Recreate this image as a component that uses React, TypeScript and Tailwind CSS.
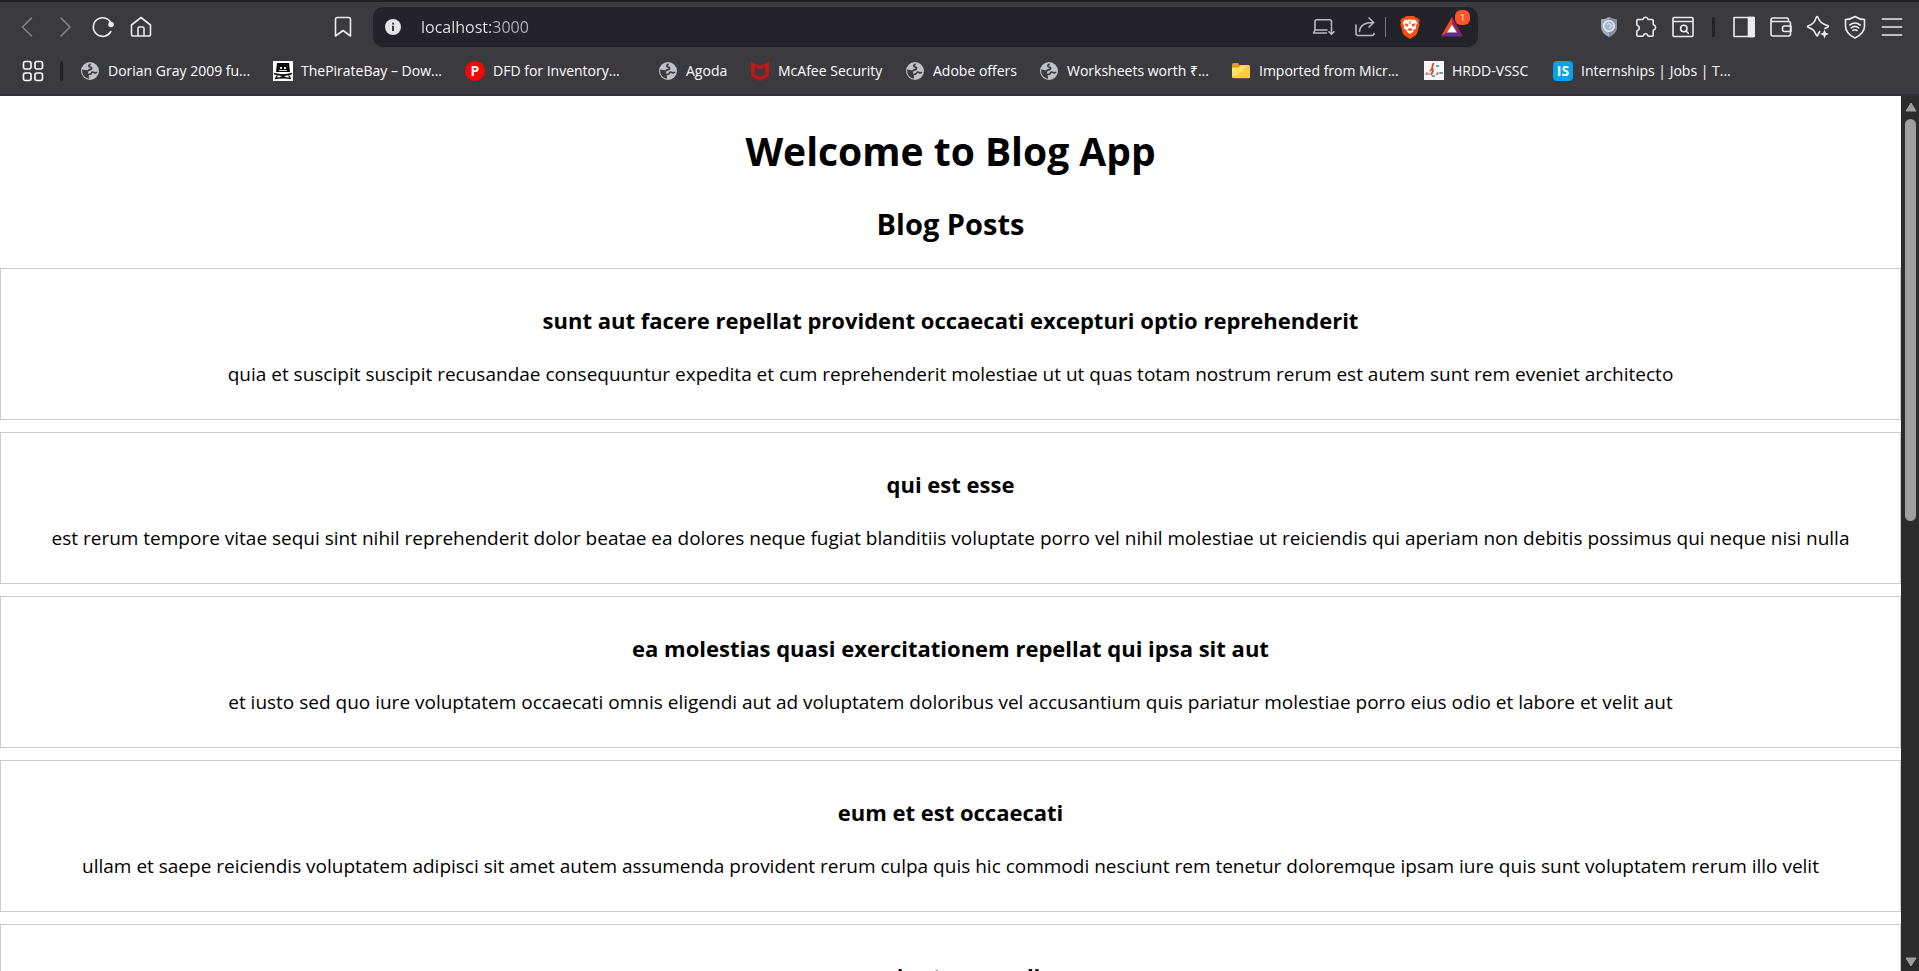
import type { ReactNode } from 'react';

type Post = { id: number; title: string; body: string };

const posts: Post[] = [
  {
    id: 1,
    title: 'sunt aut facere repellat provident occaecati excepturi optio reprehenderit',
    body: 'quia et suscipit suscipit recusandae consequuntur expedita et cum reprehenderit molestiae ut ut quas totam nostrum rerum est autem sunt rem eveniet architecto',
  },
  {
    id: 2,
    title: 'qui est esse',
    body: 'est rerum tempore vitae sequi sint nihil reprehenderit dolor beatae ea dolores neque fugiat blanditiis voluptate porro vel nihil molestiae ut reiciendis qui aperiam non debitis possimus qui neque nisi nulla',
  },
  {
    id: 3,
    title: 'ea molestias quasi exercitationem repellat qui ipsa sit aut',
    body: 'et iusto sed quo iure voluptatem occaecati omnis eligendi aut ad voluptatem doloribus vel accusantium quis pariatur molestiae porro eius odio et labore et velit aut',
  },
  {
    id: 4,
    title: 'eum et est occaecati',
    body: 'ullam et saepe reiciendis voluptatem adipisci sit amet autem assumenda provident rerum culpa quis hic commodi nesciunt rem tenetur doloremque ipsam iure quis sunt voluptatem rerum illo velit',
  },
  { id: 5, title: 'nesciunt quas odio', body: '' },
];

function Icon({ children, size = 'size-6' }: { children: ReactNode; size?: string }) {
  return (
    <svg
      viewBox="0 0 24 24"
      className={`${size} shrink-0`}
      fill="none"
      stroke="currentColor"
      strokeWidth="1.6"
      strokeLinecap="round"
      strokeLinejoin="round"
      aria-hidden="true"
    >
      {children}
    </svg>
  );
}

function ToolButton({ label, children, dim = false }: { label: string; children: ReactNode; dim?: boolean }) {
  return (
    <button
      type="button"
      aria-label={label}
      className={`flex h-10 w-[38px] shrink-0 items-center justify-center ${dim ? 'text-[#85848a]' : 'text-[#ececf0]'}`}
    >
      {children}
    </button>
  );
}

function Divider() {
  return <span className="h-5 w-[3px] shrink-0 rounded-full bg-[#232228]" />;
}

function GlobeIcon() {
  return (
    <svg viewBox="0 0 20 20" className="size-5 shrink-0" aria-hidden="true">
      <circle cx="10" cy="10" r="9" fill="#bfc1c6" />
      <path
        d="M10.6 2.9c-1.5.7-2.2 1.7-1.5 2.6.8.9 2 .3 2.4 1.4.4 1.2-.9 1.8-2.2 2-1.2.2-1.1 1.4-2.5 1.2L3 9.5c-.3 3.6 2.2 6.6 5.2 7.2.2-1.2-.6-1.6-.4-2.7.3-1 1.9-.6 2.9-1 1-.5.5-1.8 1.8-2 1.3-.2 1.7.9 2.9.8.8 0 1.2-.4 1.5-.8"
        fill="none"
        stroke="#3b3a3f"
        strokeWidth="1.7"
      />
      <path d="M3 9.6c1.800 1.200 3.600.4 5 1.600 1 1-.6 2.300-.4 3.300l.4 2C5 15.600 2.900 13 3 9.600Z" fill="#3b3a3f" />
    </svg>
  );
}

function PirateIcon() {
  return (
    <svg viewBox="0 0 20 20" className="size-5 shrink-0" aria-hidden="true">
      <path d="M0 0h20v20H0z" fill="#fff" />
      <path d="M4 2h12l1 9H3z" fill="#050505" />
      <path d="M7 6h2v2H7zM11 6h2v2h-2zM6 9h8v1H6z" fill="#ddd" />
      <path d="M1 12.500c6 2 12 2 18 0M2 17.500c5-1 11-1 16 0M5 13l-2 3.500M15 13l2 3.500M7 14l6 3M13 14l-6 3" stroke="#111" strokeWidth="1.500" fill="none" />
    </svg>
  );
}

function PIcon() {
  return (
    <span className="flex size-5 shrink-0 items-center justify-center rounded-full bg-[#f90505] text-sm font-bold leading-5 text-white">
      P
    </span>
  );
}

function McAfeeIcon() {
  return (
    <svg viewBox="0 0 20 20" className="size-5 shrink-0" aria-hidden="true">
      <path d="M1 0.500 10 5l9-4.500v15L10 20l-9-4.500ZM4.700 6v7.200l5.300 2.700 5.300-2.700V6L10 8.800Z" fill="#c01818" fillRule="evenodd" />
    </svg>
  );
}

function FolderIcon() {
  return (
    <svg viewBox="0 0 20 20" className="size-5 shrink-0" aria-hidden="true">
      <path d="M1 3.500Q1 2 2.500 2H7l2 2.500h3V8H1Z" fill="#dca006" />
      <path d="M1 6.500h6.500L9.500 4h8Q19 4 19 5.500v10.300q0 1.500-1.500 1.500h-15Q1 17.300 1 15.800Z" fill="#fbcb43" />
      <path d="M1 7h6.800l2-2.300H16L6 15H1Z" fill="#ffdf70" />
    </svg>
  );
}

function HrddIcon() {
  return (
    <svg viewBox="0 0 20 20" className="size-5 shrink-0" aria-hidden="true">
      <path d="M0 0h20v19H0z" fill="#f7f7f7" />
      <path d="m9.500 2-1.500 5 1 3-2 4M9 7l-3 3" stroke="#d2452b" strokeWidth="1.700" fill="none" />
      <path d="M1 13h5M3 11v3M13 12h4" stroke="#df8a78" strokeWidth="1.500" />
      <path d="M12 5h3M8 15h3M12 13h2M16 12h3" stroke="#4688b8" strokeWidth="1.500" />
    </svg>
  );
}

function InternIcon() {
  return (
    <span className="flex size-5 shrink-0 items-center justify-center rounded-sm bg-[#02a3ea] text-sm font-bold leading-5 text-white">
      IS
    </span>
  );
}

const bookmarks: { label: string; icon: ReactNode; width: string }[] = [
  { label: 'Dorian Gray 2009 fu...', icon: <GlobeIcon />, width: 'w-[193px]' },
  { label: 'ThePirateBay – Dow...', icon: <PirateIcon />, width: 'w-[192px]' },
  { label: 'DFD for Inventory...', icon: <PIcon />, width: 'w-[193px]' },
  { label: 'Agoda', icon: <GlobeIcon />, width: 'w-[92px]' },
  { label: 'McAfee Security', icon: <McAfeeIcon />, width: 'w-[155px]' },
  { label: 'Adobe offers', icon: <GlobeIcon />, width: 'w-[134px]' },
  { label: 'Worksheets worth ₹...', icon: <GlobeIcon />, width: 'w-[192px]' },
  { label: 'Imported from Micr...', icon: <FolderIcon />, width: 'w-[193px]' },
  { label: 'HRDD-VSSC', icon: <HrddIcon />, width: 'w-[129px]' },
  { label: 'Internships | Jobs | T...', icon: <InternIcon />, width: 'w-[193px]' },
];

function AddressBar() {
  return (
    <div className="flex h-10 min-w-0 flex-1 items-center rounded-[10px] bg-[#242329] pl-3 pr-2">
      <button type="button" aria-label="Site information" className="shrink-0">
        <svg viewBox="0 0 16 16" className="size-4" aria-hidden="true">
          <circle cx="8" cy="8" r="8" fill="#e4e4e9" />
          <path d="M7 6.800h2V12H7zM7 3.800h2v1.800H7z" fill="#3b3a3f" />
        </svg>
      </button>
      <input
        aria-label="Address"
        defaultValue="localhost:3000"
        className="ml-5 min-w-0 flex-1 bg-linear-to-r from-[#e8e8ec] from-[72px] to-[#b4b4ba] to-[72px] bg-clip-text text-base text-transparent outline-none"
      />
      <div className="flex items-center text-[#b9b8be]">
        <button type="button" aria-label="Install app" className="flex w-[42px] justify-center">
          <Icon size="size-6">
            <path d="M20.500 11V6.500q0-1.700-1.700-1.700H5.700Q4 4.800 4 6.500V15M4 15l-1.500 3H15.500M4 15H16M20.500 12.500V19M18 16.800l2.500 2.500 2.500-2.500" />
          </Icon>
        </button>
        <button type="button" aria-label="Share" className="flex w-[41px] justify-center">
          <Icon size="size-6">
            <path d="M3 10v8.500Q3 20.500 5 20.500h14q2 0 2-2M6.500 16.500C7 10.500 11 7.500 20.500 7.500M16 3l4.700 4.500L16 12" />
          </Icon>
        </button>
        <span className="h-5 w-px bg-[#77767c]" />
        <button type="button" aria-label="Brave Shields" className="flex w-12 justify-center">
          <svg viewBox="0 0 20 24" className="h-6 w-5" aria-hidden="true">
            <path d="M6 1h8l2 2 1.500-.3L19.800 5.500 19 7.500l.6 2L17 18.500q-.4 1.200-1.500 2L10 24l-5.500-3.500Q3.400 19.700 3 18.500L.4 9.500l.6-2L.2 5.500 2.500 2.700 4 3Z" fill="#fa4e12" />
            <path d="M5 4.500 7.500 5 10 4.300l2.500.7 2.500-.5L17.500 8l-1.800 3 .5 2.500-3 1.500.3 1.500L10 19l-3.500-2.500.3-1.500-3-1.500.5-2.500L2.500 8Z" fill="#fff" />
            <path d="m4.500 8.300 4 .9-.8 2.600-2.400-1.300ZM15.500 8.300l-4 .9.8 2.600 2.400-1.300ZM7.300 14.300 10 13l2.700 1.300L10 16.300ZM9.500 5.500h1V9h-1z" fill="#fa4e12" />
          </svg>
        </button>
        <button type="button" aria-label="Brave Rewards, 1 notification" className="relative flex w-9 justify-center">
          <svg viewBox="0 0 24 22" className="h-[22px] w-6" aria-hidden="true">
            <path d="M12 1 1 20.500l6-4 5-8Z" fill="#ff4724" />
            <path d="m12 1 11 19.500-6-4-5-8Z" fill="#9e1f63" />
            <path d="M1 20.500h22l-6-4H7Z" fill="#662d91" />
            <path d="M12 8.500 7 16.500h10Z" fill="#fff" />
          </svg>
          <span className="absolute -top-1.5 right-0 flex size-[15px] items-center justify-center rounded-[6px] bg-[#ff5427] text-[9px] leading-none text-white">
            1
          </span>
        </button>
      </div>
    </div>
  );
}

function Toolbar() {
  return (
    <div className="flex h-[50px] items-center">
      <div className="flex w-[373px] shrink-0 items-center justify-between pl-2 pr-[11px]">
        <div className="flex">
          <ToolButton label="Back" dim>
            <Icon><path d="M16.500 3 7.500 12l9 9" /></Icon>
          </ToolButton>
          <ToolButton label="Forward" dim>
            <Icon><path d="m8 3 9 9-9 9" /></Icon>
          </ToolButton>
          <ToolButton label="Reload">
            <Icon>
              <path d="M19.800 16.500A9.300 9.300 0 1 1 20 8" />
              <circle cx="20" cy="9.500" r="2" fill="currentColor" />
            </Icon>
          </ToolButton>
          <ToolButton label="Home">
            <Icon>
              <path d="M2.500 10 12 2.500 21.500 10v9.800q0 1.200-1.200 1.200H3.700q-1.200 0-1.200-1.200ZM9 21v-7.500q0-1.500 1.500-1.500h3q1.500 0 1.500 1.500V21" />
            </Icon>
          </ToolButton>
        </div>
        <ToolButton label="Bookmark this page">
          <Icon><path d="M4.500 21V4.500Q4.500 2.500 6.500 2.500h11q2 0 2 2V21L12 15.500Z" /></Icon>
        </ToolButton>
      </div>
      <AddressBar />
      <div className="flex w-[441px] shrink-0 items-center justify-end pr-[9px] [&>button]:w-[37px]">
        <ToolButton label="Security extension">
          <svg viewBox="0 0 18 22" className="h-[22px] w-[18px]" aria-hidden="true">
            <path d="M9 1q4 2.300 8 2.300V11q0 6-8 10Q1 17 1 11V3.300Q5 3.300 9 1Z" fill="#a3abbb" />
            <path d="M9 1q4 2.300 8 2.300V11q0 6-8 10Z" fill="#838ea5" />
            <circle cx="9" cy="10" r="5.300" fill="#a9b6cc" stroke="#e4e9f3" strokeWidth="1.600" />
            <path d="M7 8.500q2-2 4 0t-2 3.500" stroke="#e4e9f3" fill="none" />
          </svg>
        </ToolButton>
        <ToolButton label="Extensions">
          <Icon>
            <path d="M4 4.500h4.500q.5 0 .7-.7a2.500 2.500 0 0 1 4.600 0q.2.700.7.700H18q1.200 0 1.200 1.200V9q0 .7.8 1a2.600 2.600 0 0 1 0 4.800q-.8.300-.8 1V20q0 1.200-1.200 1.200h-3.200q-.7 0-1-.8a2.300 2.300 0 0 0-4.400 0q-.3.800-1 .8H4Q2.800 21.200 2.800 20v-3.500q0-.7.8-1a2.700 2.700 0 0 0 0-5q-.8-.3-.8-1V5.700Q2.800 4.500 4 4.500Z" />
          </Icon>
        </ToolButton>
        <ToolButton label="Search tabs">
          <Icon>
            <path d="M3 2.500h18q1 0 1 1v17q0 1-1 1H3q-1 0-1-1v-17q0-1 1-1ZM2 6.500h20M15 16 17.300 18.300" />
            <circle cx="12.800" cy="13.500" r="3.200" />
          </Icon>
        </ToolButton>
        <span className="flex w-6 shrink-0 justify-center"><Divider /></span>
        <ToolButton label="Side panel">
          <Icon>
            <path d="M2 2.500h20v19H2Z" />
            <path d="M16.500 2.500H22v19h-5.500Z" fill="currentColor" />
          </Icon>
        </ToolButton>
        <ToolButton label="Wallet">
          <Icon>
            <path d="M19.500 6.500V4.700q0-1.700-1.700-1.700H4Q2 3 2 4.800V19q0 2 2 2h15.500q2 0 2-2V8.500q0-2-2-2H4q-2 0-2-1.700M21.500 11h-6q-2 0-2 2v1.500q0 2 2 2h6.500V11" />
          </Icon>
        </ToolButton>
        <ToolButton label="Assistant">
          <Icon>
            <path d="M19 13.500q1.500-.8 3-1.500.8-.7 0-1.300-6-2-7.700-4.200-1.500-2-2.500-4.500-.8-.8-1.300 0Q9 6 7.500 7.800 5.500 9.800 2 11q-.8.600 0 1.200 4 1.300 5.700 3.300 1.500 2 2.800 5 .6.700 1.200 0 1-2.500 2-4" />
            <path d="m18.500 14.500 1.300 3.200L23 19l-3.200 1.300-1.300 3.200-1.300-3.200L14 19l3.200-1.300Z" fill="currentColor" stroke="none" />
          </Icon>
        </ToolButton>
        <ToolButton label="VPN">
          <Icon>
            <path d="M12 1.500q4.500 3 9.500 3V11q0 7.500-9.500 12Q2.500 18.500 2.500 11V4.500q5 0 9.500-3ZM6.800 10q5.200-4 10.400 0M8.300 12.800q3.700-2.800 7.400 0M10 15.500q2-1.500 4 0" />
          </Icon>
        </ToolButton>
        <ToolButton label="Menu">
          <Icon><path d="M1.800 4h20.400M1.800 12h20.400M1.800 20h20.400" strokeLinecap="butt" /></Icon>
        </ToolButton>
      </div>
    </div>
  );
}

function BookmarksBar() {
  return (
    <nav aria-label="Bookmarks" className="flex h-[38px] items-center overflow-hidden pl-[21px] text-white">
      <button type="button" aria-label="All bookmarks" className="mr-[15px] shrink-0">
        <Icon>
          <rect x="2.500" y="2.500" width="7.500" height="7.500" rx="2" />
          <rect x="14" y="2.500" width="7.500" height="7.500" rx="2" />
          <rect x="2.500" y="14" width="7.500" height="7.500" rx="2" />
          <rect x="14" y="14" width="7.500" height="7.500" rx="2" />
        </Icon>
      </button>
      <Divider />
      <ul className="ml-[17px] flex">
        {bookmarks.map((b) => (
          <li key={b.label} className={`${b.width} shrink-0`}>
            <a href="#" className="flex items-center gap-2 whitespace-nowrap text-sm leading-5">
              {b.icon}
              {b.label}
            </a>
          </li>
        ))}
      </ul>
    </nav>
  );
}

function PostCard({ post }: { post: Post }) {
  return (
    <article className="border border-[#cccccc] px-5 pt-[35px] pb-8">
      <h3 className="text-[22px] leading-8 font-bold">{post.title}</h3>
      <p className="mt-[25px] min-h-[26px] text-[19px] leading-[26px]">{post.body}</p>
    </article>
  );
}

function Scrollbar() {
  return (
    <div className="flex w-[18px] shrink-0 flex-col items-center bg-[#2c2c2c] py-1 pl-px" aria-hidden="true">
      <svg viewBox="0 0 12 10" className="mt-0.5 h-2.5 w-3 shrink-0">
        <path d="M6 1 11 9H1Z" fill="#9f9f9f" stroke="#9f9f9f" strokeLinejoin="round" />
      </svg>
      <div className="mt-[7px] min-h-0 flex-1">
        <div className="h-[48%] w-[11px] rounded-full bg-[#9f9f9f]" />
      </div>
      <svg viewBox="0 0 12 10" className="h-2.5 w-3 shrink-0">
        <path d="M6 9 1 1h10Z" fill="#9f9f9f" stroke="#9f9f9f" strokeLinejoin="round" />
      </svg>
    </div>
  );
}

export default function App() {
  return (
    <div className="flex h-screen flex-col overflow-hidden bg-white font-['Open_Sans','Noto_Sans',sans-serif] text-black">
      <header className="shrink-0 border-t-2 border-b-2 border-t-[#1f1e25] border-b-[#312f37] bg-[#3b3a3f] pb-1">
        <Toolbar />
        <BookmarksBar />
      </header>
      <div className="flex min-h-0 flex-1">
        <main className="min-w-0 flex-1 overflow-hidden text-center">
          <h1 className="mt-[31px] text-[39px] leading-[48px] font-bold">Welcome to Blog App</h1>
          <h2 className="mt-[31px] text-[29px] leading-9 font-bold">Blog Posts</h2>
          <div className="mt-[26px] flex flex-col gap-3">
            {posts.map((post) => (
              <PostCard key={post.id} post={post} />
            ))}
          </div>
        </main>
        <Scrollbar />
      </div>
    </div>
  );
}
